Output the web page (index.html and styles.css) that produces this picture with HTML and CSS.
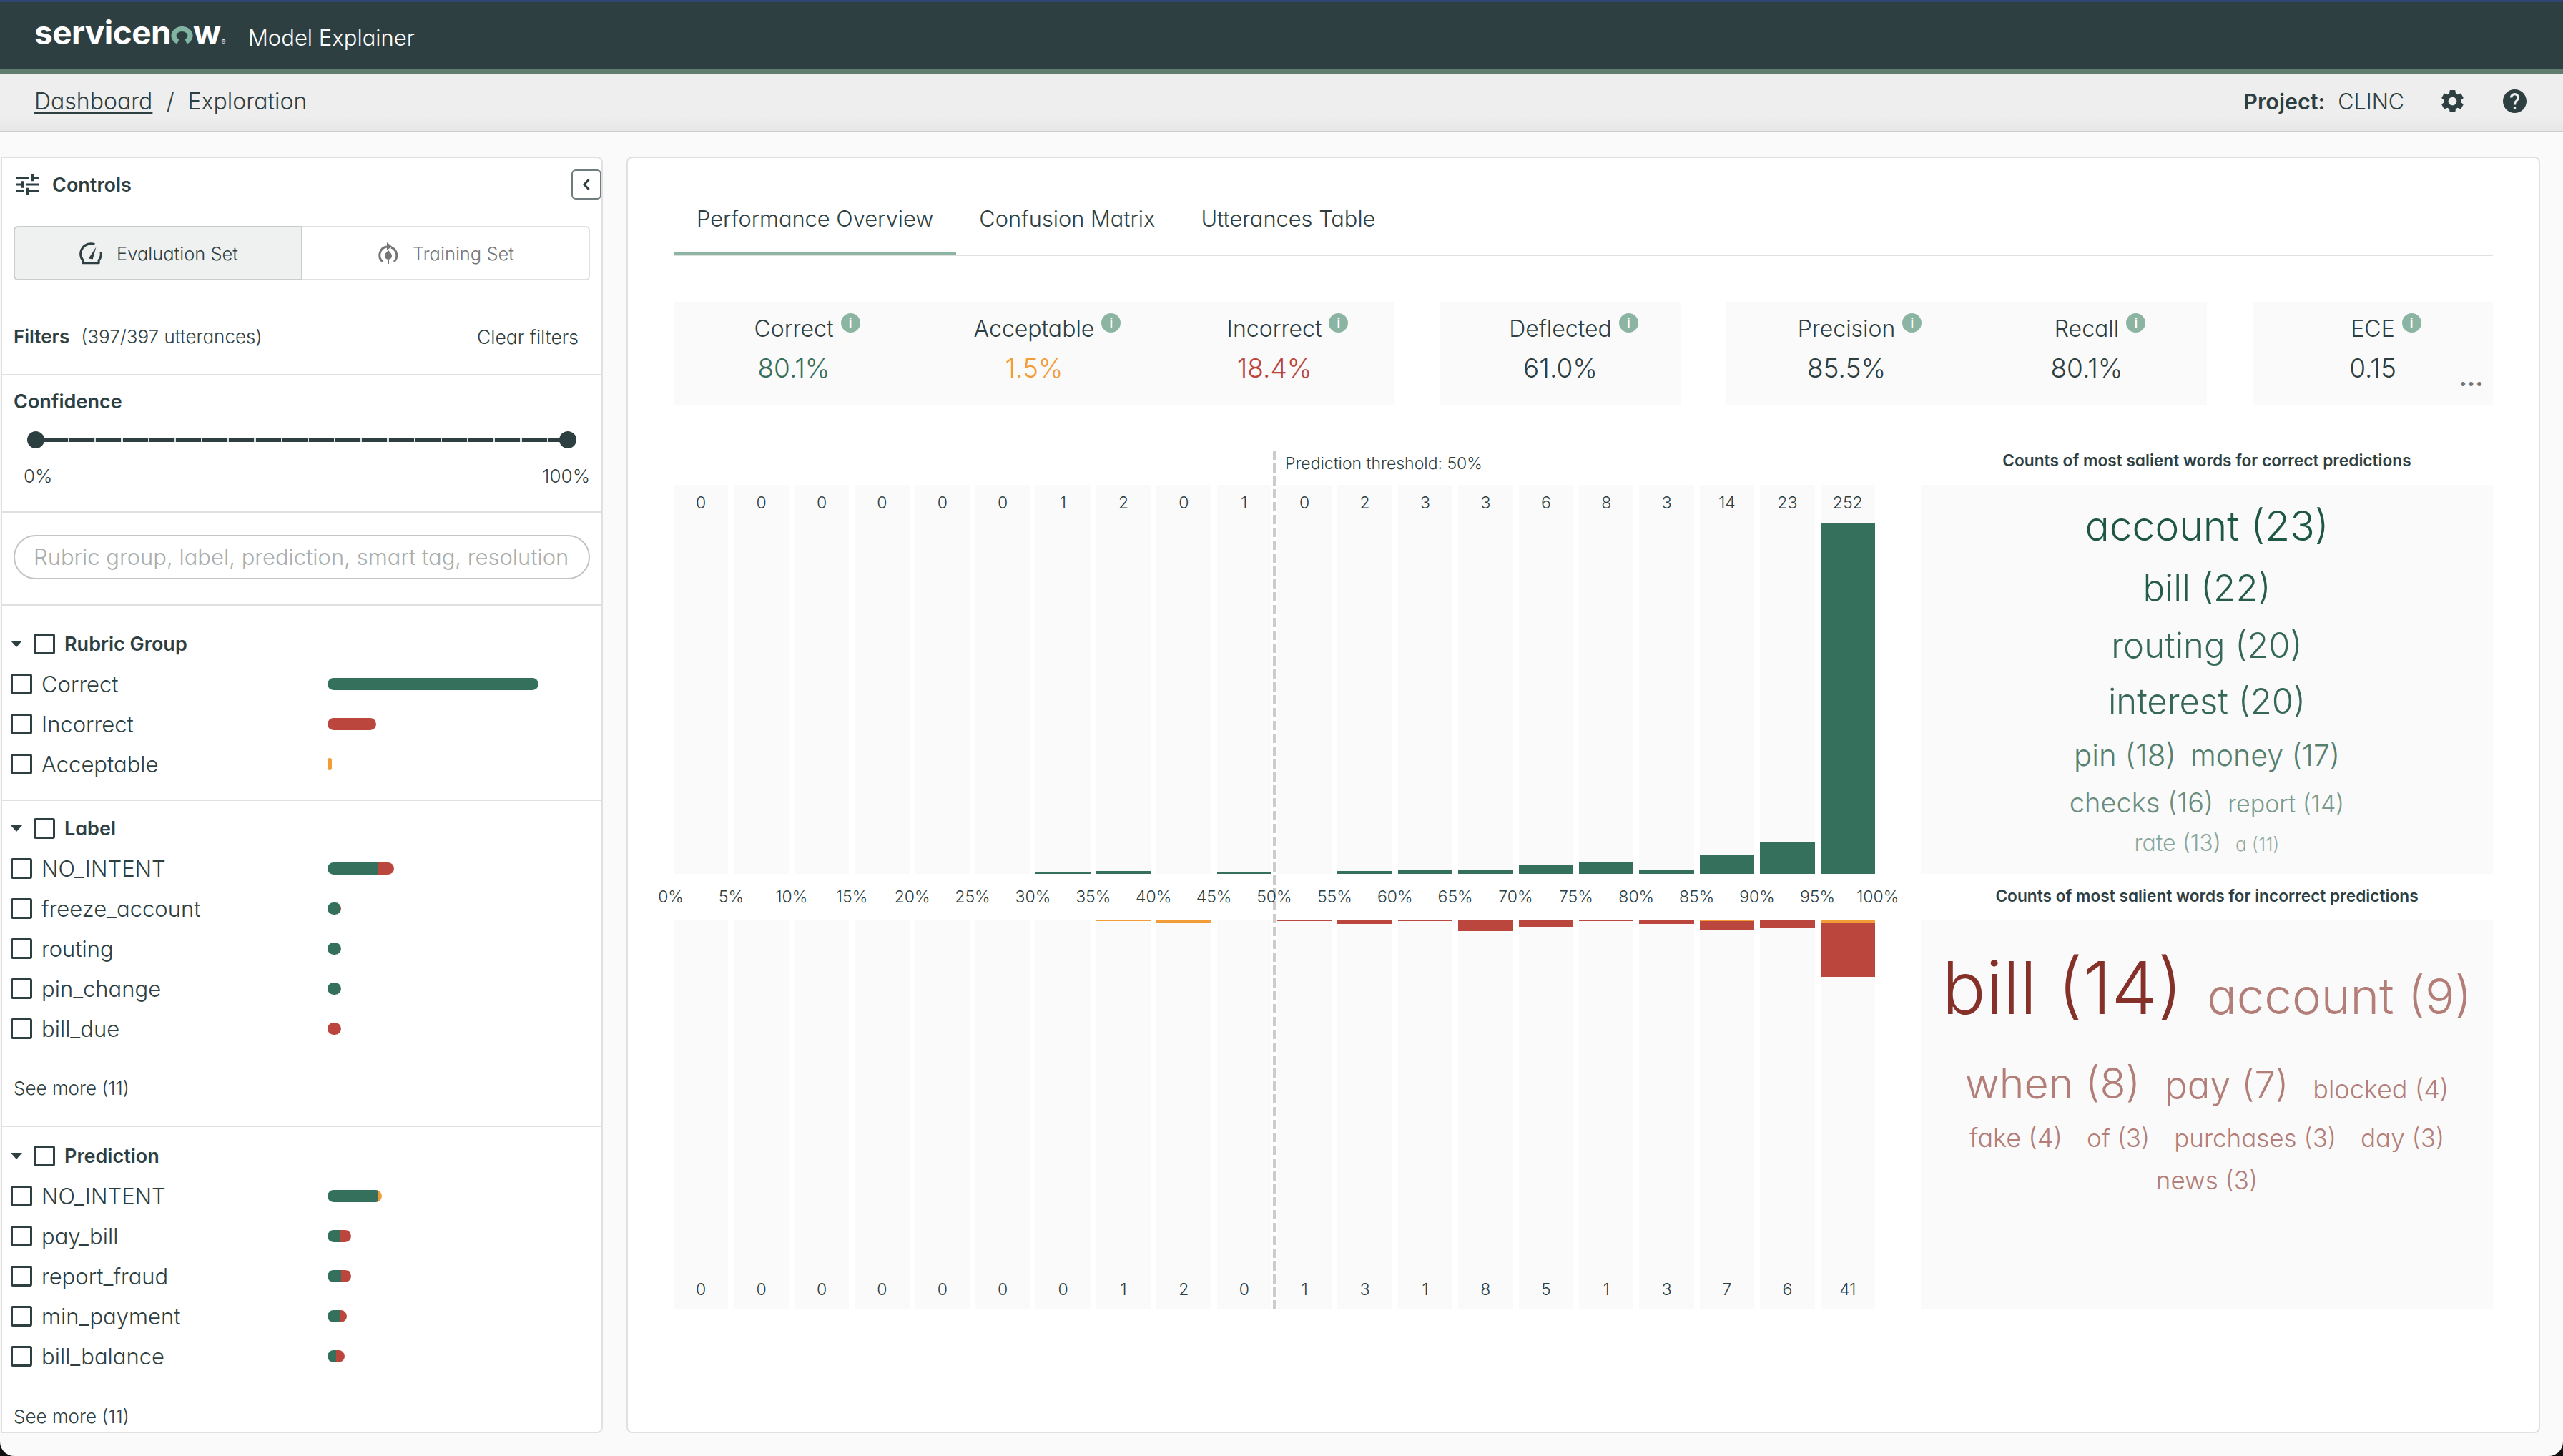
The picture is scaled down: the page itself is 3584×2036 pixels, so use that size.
FILE: index.html
```html
<!DOCTYPE html>
<html lang="en">
<head>
  <meta charset="UTF-8">
  <title>Model Explainer</title>
  <link rel="stylesheet" href="styles.css">
</head>
<body>
<div class="app">
  <!-- Top bar -->
  <header class="topbar">
    <div class="logo">servicen<svg class="logo-ring" viewBox="0 0 30 26"><path d="M9.5 21.3 A11.5 9.5 0 1 1 20.5 21.3" fill="none" stroke="#81b5a1" stroke-width="7"/></svg>w<span class="logo-reg">®</span></div>
    <div class="app-name">Model Explainer</div>
  </header>

  <!-- Breadcrumbs -->
  <nav class="crumbs">
    <a class="crumb-link">Dashboard</a>
    <span class="crumb-sep">/</span>
    <span>Exploration</span>
    <div class="project">
      <strong>Project:</strong>
      <span class="project-name">CLINC</span>
      <svg class="icon-gear" viewBox="0 0 24 24"><path d="M19.14 12.94c.04-.3.06-.61.06-.94 0-.32-.02-.64-.07-.94l2.03-1.58c.18-.14.23-.41.12-.61l-1.92-3.32c-.12-.22-.37-.29-.59-.22l-2.39.96c-.5-.38-1.03-.7-1.62-.94l-.36-2.54c-.04-.24-.24-.41-.48-.41h-3.84c-.24 0-.43.17-.47.41l-.36 2.54c-.59.24-1.13.57-1.62.94l-2.39-.96c-.22-.08-.47 0-.59.22L2.74 8.87c-.12.21-.08.47.12.61l2.03 1.58c-.05.3-.09.63-.09.94s.02.64.07.94l-2.03 1.58c-.18.14-.23.41-.12.61l1.92 3.32c.12.22.37.29.59.22l2.39-.96c.5.38 1.03.7 1.62.94l.36 2.54c.05.24.24.41.48.41h3.84c.24 0 .44-.17.47-.41l.36-2.54c.59-.24 1.13-.56 1.62-.94l2.39.96c.22.08.47 0 .59-.22l1.92-3.32c.12-.22.07-.47-.12-.61l-2.01-1.58zM12 15.6c-1.98 0-3.6-1.62-3.6-3.6s1.62-3.6 3.6-3.6 3.6 1.62 3.6 3.6-1.62 3.6-3.6 3.6z"/></svg>
      <svg class="icon-help" viewBox="2 2 20 20"><path d="M12 2C6.48 2 2 6.48 2 12s4.48 10 10 10 10-4.48 10-10S17.52 2 12 2zm1 17h-2v-2h2v2zm2.07-7.75l-.9.92C13.45 12.9 13 13.5 13 15h-2v-.5c0-1.1.45-2.1 1.17-2.83l1.24-1.26c.37-.36.59-.86.59-1.41 0-1.1-.9-2-2-2s-2 .9-2 2H8c0-2.21 1.79-4 4-4s4 1.79 4 4c0 .88-.36 1.68-.93 2.25z"/></svg>
    </div>
  </nav>

  <div class="content">
    <!-- Controls -->
    <aside class="controls">
      <section class="controls-top">
        <div class="controls-head">
          <svg class="icon-tune" viewBox="3 3 18 18" preserveAspectRatio="none"><path d="M3 17v2h6v-2H3zM3 5v2h10V5H3zm10 16v-2h8v-2h-8v-2h-2v6h2zM7 9v2H3v2h4v2h2V9H7zm14 4v-2H11v2h10zm-6-4h2V7h4V5h-4V3h-2v6z"/></svg>
          <span class="controls-title">Controls</span>
          <button class="collapse-btn"><svg viewBox="0 0 12 20"><path d="M9.5 3 L3 10 L9.5 17" fill="none" stroke="#2e3f42" stroke-width="3"/></svg></button>
        </div>
        <div class="set-toggle">
          <div class="set-btn set-active">
            <svg class="set-icon" viewBox="0 0 34 30"><path d="M22 3.5 A13.5 13.5 0 0 0 6.5 24.5 V28 H27.5 V24.5 A13.5 13.5 0 0 0 30.3 13.5" fill="none" stroke="#2e3f42" stroke-width="3" stroke-linejoin="round"/><path d="M14 22 L24 7 L19.5 23 Z" fill="#2e3f42"/></svg>
            Evaluation Set
          </div>
          <div class="set-btn">
            <svg class="set-icon set-icon-train" viewBox="0 0 32 34"><path d="M8 29 A12 12 0 0 1 14 8 M24 29 A12 12 0 0 0 20 9" fill="none" stroke="#757575" stroke-width="3"/><path d="M14 2 L21 7.5 L14 13 Z" fill="#757575"/><path d="M16 13 C20 17 21 19 21 21 A5 5 0 0 1 11 21 C11 19 12 17 16 13 Z M15 27 h2 v5 h-2 Z" fill="#757575"/></svg>
            Training Set
          </div>
        </div>
        <div class="filters-row">
          <strong>Filters</strong>
          <span class="filters-count">(397/397 utterances)</span>
          <span class="clear-filters">Clear filters</span>
        </div>
      </section>

      <section class="confidence">
        <div class="section-title">Confidence</div>
        <div class="slider"><span class="thumb"></span><div class="track"></div><span class="thumb"></span></div>
        <div class="slider-labels"><span>0%</span><span>100%</span></div>
      </section>

      <section class="search">
        <div class="search-box">Rubric group, label, prediction, smart tag, resolution</div>
      </section>

      <section class="group group-rubric">
        <div class="group-head"><span class="caret"></span><span class="check"></span><strong>Rubric Group</strong></div>
        <div class="row"><span class="check"></span><span class="row-label">Correct</span><div class="mini-bar"><i class="seg-g" style="width:295px"></i></div></div>
        <div class="row"><span class="check"></span><span class="row-label">Incorrect</span><div class="mini-bar"><i class="seg-r" style="width:68px"></i></div></div>
        <div class="row"><span class="check"></span><span class="row-label">Acceptable</span><div class="mini-bar"><i class="seg-o" style="width:6px"></i></div></div>
      </section>

      <section class="group">
        <div class="group-head"><span class="caret"></span><span class="check"></span><strong>Label</strong></div>
        <div class="row"><span class="check"></span><span class="row-label">NO_INTENT</span><div class="mini-bar"><i class="seg-g" style="width:70px"></i><i class="seg-r" style="width:23px"></i></div></div>
        <div class="row"><span class="check"></span><span class="row-label">freeze_account</span><div class="mini-bar"><i class="seg-g" style="width:17px"></i><i class="seg-r" style="width:2px"></i></div></div>
        <div class="row"><span class="check"></span><span class="row-label">routing</span><div class="mini-bar"><i class="seg-g" style="width:19px"></i></div></div>
        <div class="row"><span class="check"></span><span class="row-label">pin_change</span><div class="mini-bar"><i class="seg-g" style="width:19px"></i></div></div>
        <div class="row"><span class="check"></span><span class="row-label">bill_due</span><div class="mini-bar"><i class="seg-r" style="width:19px"></i></div></div>
        <div class="see-more">See more (11)</div>
      </section>

      <section class="group group-last">
        <div class="group-head"><span class="caret"></span><span class="check"></span><strong>Prediction</strong></div>
        <div class="row"><span class="check"></span><span class="row-label">NO_INTENT</span><div class="mini-bar"><i class="seg-g" style="width:70px"></i><i class="seg-o" style="width:6px"></i></div></div>
        <div class="row"><span class="check"></span><span class="row-label">pay_bill</span><div class="mini-bar"><i class="seg-g" style="width:18px"></i><i class="seg-r" style="width:15px"></i></div></div>
        <div class="row"><span class="check"></span><span class="row-label">report_fraud</span><div class="mini-bar"><i class="seg-g" style="width:19px"></i><i class="seg-r" style="width:14px"></i></div></div>
        <div class="row"><span class="check"></span><span class="row-label">min_payment</span><div class="mini-bar"><i class="seg-g" style="width:18px"></i><i class="seg-r" style="width:9px"></i></div></div>
        <div class="row"><span class="check"></span><span class="row-label">bill_balance</span><div class="mini-bar"><i class="seg-g" style="width:12px"></i><i class="seg-r" style="width:12px"></i></div></div>
        <div class="see-more">See more (11)</div>
      </section>
    </aside>

    <!-- Main panel -->
    <main class="panel">
      <div class="tabs">
        <div class="tab tab-active">Performance Overview</div>
        <div class="tab">Confusion Matrix</div>
        <div class="tab">Utterances Table</div>
      </div>

      <div class="stats">
        <div class="stat-group stat-3">
          <div class="stat"><div class="stat-label"><span class="stat-name">Correct<span class="info">i</span></span></div><div class="stat-value val-g">80.1%</div></div>
          <div class="stat"><div class="stat-label"><span class="stat-name">Acceptable<span class="info">i</span></span></div><div class="stat-value val-o">1.5%</div></div>
          <div class="stat"><div class="stat-label"><span class="stat-name">Incorrect<span class="info">i</span></span></div><div class="stat-value val-r">18.4%</div></div>
        </div>
        <div class="stat-group stat-1">
          <div class="stat"><div class="stat-label"><span class="stat-name">Deflected<span class="info">i</span></span></div><div class="stat-value">61.0%</div></div>
        </div>
        <div class="stat-group stat-2">
          <div class="stat"><div class="stat-label"><span class="stat-name">Precision<span class="info">i</span></span></div><div class="stat-value">85.5%</div></div>
          <div class="stat"><div class="stat-label"><span class="stat-name">Recall<span class="info">i</span></span></div><div class="stat-value">80.1%</div></div>
        </div>
        <div class="stat-group stat-1 stat-ece">
          <div class="stat"><div class="stat-label"><span class="stat-name">ECE<span class="info">i</span></span></div><div class="stat-value">0.15</div></div>
          <span class="more-dots">•••</span>
        </div>
      </div>

      <div class="perf">
        <div class="charts">
          <div class="threshold-line"></div>
          <div class="threshold-label">Prediction threshold: 50%</div>
          <div class="bars bars-top">
            <div class="col"><span class="count">0</span></div>
            <div class="col"><span class="count">0</span></div>
            <div class="col"><span class="count">0</span></div>
            <div class="col"><span class="count">0</span></div>
            <div class="col"><span class="count">0</span></div>
            <div class="col"><span class="count">0</span></div>
            <div class="col"><span class="count">1</span><i class="seg-g" style="height:2px"></i></div>
            <div class="col"><span class="count">2</span><i class="seg-g" style="height:4px"></i></div>
            <div class="col"><span class="count">0</span></div>
            <div class="col"><span class="count">1</span><i class="seg-g" style="height:2px"></i></div>
            <div class="col"><span class="count">0</span></div>
            <div class="col"><span class="count">2</span><i class="seg-g" style="height:4px"></i></div>
            <div class="col"><span class="count">3</span><i class="seg-g" style="height:6px"></i></div>
            <div class="col"><span class="count">3</span><i class="seg-g" style="height:6px"></i></div>
            <div class="col"><span class="count">6</span><i class="seg-g" style="height:12px"></i></div>
            <div class="col"><span class="count">8</span><i class="seg-g" style="height:16px"></i></div>
            <div class="col"><span class="count">3</span><i class="seg-g" style="height:6px"></i></div>
            <div class="col"><span class="count">14</span><i class="seg-g" style="height:27px"></i></div>
            <div class="col"><span class="count">23</span><i class="seg-g" style="height:45px"></i></div>
            <div class="col"><span class="count">252</span><i class="seg-g" style="height:491px"></i></div>
          </div>
          <div class="axis">
            <span>0%</span><span>5%</span><span>10%</span><span>15%</span><span>20%</span><span>25%</span><span>30%</span>
            <span>35%</span><span>40%</span><span>45%</span><span>50%</span><span>55%</span><span>60%</span><span>65%</span>
            <span>70%</span><span>75%</span><span>80%</span><span>85%</span><span>90%</span><span>95%</span><span>100%</span>
          </div>
          <div class="bars bars-bottom">
            <div class="col"><span class="count">0</span></div>
            <div class="col"><span class="count">0</span></div>
            <div class="col"><span class="count">0</span></div>
            <div class="col"><span class="count">0</span></div>
            <div class="col"><span class="count">0</span></div>
            <div class="col"><span class="count">0</span></div>
            <div class="col"><span class="count">0</span></div>
            <div class="col"><div class="stack"><i class="seg-o" style="height:2px"></i></div><span class="count">1</span></div>
            <div class="col"><div class="stack"><i class="seg-o" style="height:4px"></i></div><span class="count">2</span></div>
            <div class="col"><span class="count">0</span></div>
            <div class="col"><div class="stack"><i class="seg-r" style="height:2px"></i></div><span class="count">1</span></div>
            <div class="col"><div class="stack"><i class="seg-r" style="height:6px"></i></div><span class="count">3</span></div>
            <div class="col"><div class="stack"><i class="seg-r" style="height:2px"></i></div><span class="count">1</span></div>
            <div class="col"><div class="stack"><i class="seg-r" style="height:16px"></i></div><span class="count">8</span></div>
            <div class="col"><div class="stack"><i class="seg-r" style="height:10px"></i></div><span class="count">5</span></div>
            <div class="col"><div class="stack"><i class="seg-r" style="height:2px"></i></div><span class="count">1</span></div>
            <div class="col"><div class="stack"><i class="seg-r" style="height:6px"></i></div><span class="count">3</span></div>
            <div class="col"><div class="stack"><i class="seg-o" style="height:2px"></i><i class="seg-r" style="height:12px"></i></div><span class="count">7</span></div>
            <div class="col"><div class="stack"><i class="seg-r" style="height:12px"></i></div><span class="count">6</span></div>
            <div class="col"><div class="stack"><i class="seg-o" style="height:4px"></i><i class="seg-r" style="height:76px"></i></div><span class="count">41</span></div>
          </div>
        </div>

        <div class="clouds">
          <div class="cloud-title cloud-title-first">Counts of most salient words for correct predictions</div>
          <div class="cloud cloud-good">
            <div class="cloud-row"><span class="g1">account (23)</span></div>
            <div class="cloud-row"><span class="g2">bill (22)</span></div>
            <div class="cloud-row"><span class="g3">routing (20)</span></div>
            <div class="cloud-row"><span class="g3">interest (20)</span></div>
            <div class="cloud-row"><span class="g4">pin (18)</span><span class="g4b">money (17)</span></div>
            <div class="cloud-row"><span class="g5">checks (16)</span><span class="g6">report (14)</span></div>
            <div class="cloud-row"><span class="g7">rate (13)</span><span class="g8">a (11)</span></div>
          </div>
          <div class="cloud-title">Counts of most salient words for incorrect predictions</div>
          <div class="cloud cloud-bad">
            <div class="cloud-row bad-row-1"><span class="b1">bill (14)</span><span class="b2">account (9)</span></div>
            <div class="cloud-row bad-row-2"><span class="b3">when (8)</span><span class="b4">pay (7)</span><span class="b5">blocked (4)</span></div>
            <div class="cloud-row bad-row-3"><span class="b5">fake (4)</span><span class="b6">of (3)</span><span class="b6">purchases (3)</span><span class="b6">day (3)</span></div>
            <div class="cloud-row bad-row-4"><span class="b6">news (3)</span></div>
          </div>
        </div>
      </div>
    </main>
  </div>
</div>
</body>
</html>
```

FILE: styles.css
```css
/* Page */
* { box-sizing: border-box; }

body {
  margin: 0;
  background: #111;
  font-family: Inter, "Liberation Sans", sans-serif;
  font-feature-settings: "cv11";
  font-weight: 300;
  color: #2e3f42;
}

.app {
  height: 2036px;
  display: flex;
  flex-direction: column;
  background: #fafafa;
  border-radius: 0 0 20px 20px;
  overflow: hidden;
}

strong { font-weight: 600; }

/* Top bar */
.topbar {
  height: 104px;
  flex: none;
  display: flex;
  align-items: center;
  padding: 5px 0 0 48px;
  background: #2e3f42;
  border-top: 3px solid #2d4672;
  border-bottom: 8px solid #607d6f;
}

.logo {
  font-size: 46px;
  font-weight: 700;
  color: #fff;
  line-height: 52px;
  letter-spacing: -0.6px;
  white-space: nowrap;
}

.logo-ring { width: 31px; height: 26px; vertical-align: -1px; }
.logo-reg { font-size: 9px; font-weight: 400; margin-left: 1px; }

.app-name { margin-left: 32px; font-size: 31px; color: #fff; }

/* Breadcrumbs */
.crumbs {
  height: 81px;
  flex: none;
  display: flex;
  align-items: center;
  padding: 0 51px 4px 48px;
  background: linear-gradient(#eee 75%, #e6e6e6);
  border-bottom: 2px solid #ccc;
  font-size: 32px;
}

.crumb-link { text-decoration: underline; text-decoration-thickness: 2px; text-underline-offset: 4px; }
.crumb-sep { margin: 0 19px; }

.project { margin-left: auto; display: flex; align-items: center; font-size: 30.5px; }
.project-name { margin-left: 18px; }
.icon-gear { width: 39px; height: 39px; margin-left: 48px; fill: #2e3f42; }
.icon-help { width: 33px; height: 33px; margin-left: 51px; fill: #2e3f42; }

/* Layout under the bars */
.content {
  flex: 1;
  min-height: 0;
  display: flex;
  gap: 33px;
  padding: 34px 32px 32px 1px;
}

/* Controls */
.controls {
  width: 842px;
  flex: none;
  background: #fff;
  border: 2px solid #e0e0e0;
  border-radius: 0 8px 8px 0;
  overflow: hidden;
}

.controls section { border-bottom: 2px solid #e0e0e0; }

.controls-top { height: 304px; padding: 16px 0 0 16px; }

.controls-head { height: 42px; display: flex; align-items: center; margin-bottom: 37px; }
.icon-tune { width: 31px; height: 28px; margin-left: 4px; fill: #2e3f42; }
.controls-title { margin-left: 19px; font-size: 27px; font-weight: 600; }

.collapse-btn {
  width: 42px;
  height: 42px;
  margin-left: auto;
  padding: 0;
  display: flex;
  align-items: center;
  justify-content: center;
  background: #fff;
  border: 2px solid #6f7c7e;
  border-radius: 6px;
}
.collapse-btn svg { width: 12px; height: 20px; }

.set-toggle {
  width: 806px;
  height: 76px;
  display: flex;
  font-size: 25.5px;
}

.set-btn {
  flex: 1;
  display: flex;
  align-items: center;
  justify-content: center;
  gap: 18px;
  color: #757575;
  border: 2px solid #e0e0e0;
  border-left: 0;
  border-radius: 0 6px 6px 0;
}

.set-active {
  color: #2e3f42;
  background: #eff1f0;
  border: 2px solid #ccc;
  border-radius: 6px 0 0 6px;
}

.set-icon { width: 36px; height: 32px; }
.set-icon-train { width: 32px; height: 34px; }

.filters-row {
  width: 806px;
  display: flex;
  margin-top: 61px;
  font-size: 26px;
  line-height: 36px;
}
.filters-count { margin-left: 16px; }
.clear-filters { margin-left: auto; margin-right: 16px; font-size: 26.5px; }

/* Confidence */
.confidence { height: 192px; padding: 20px 16px 0; }
.section-title { font-size: 27px; font-weight: 600; line-height: 34px; }

.slider { display: flex; align-items: center; padding: 0 19px; margin-top: 24px; }
.track {
  flex: 1;
  height: 6px;
  margin: 0 -2px;
  background: repeating-linear-gradient(90deg, #2e3f42 0 35px, #ddd 35px 37.2px);
}
.thumb { width: 24px; height: 24px; border-radius: 50%; background: #2e3f42; }

.slider-labels {
  display: flex;
  justify-content: space-between;
  margin: 22px 0 0 14px;
  font-size: 26px;
  line-height: 34px;
}

/* Search */
.search { height: 130px; padding: 31px 16px 0; }
.search-box {
  height: 62px;
  padding: 0 26px;
  border: 2px solid #c4c4c4;
  border-radius: 31px;
  color: #a9aeae;
  font-size: 31px;
  line-height: 58px;
  white-space: nowrap;
  overflow: hidden;
}

/* Filter groups */
.group { padding: 10px 0 0 12px; }
.group-rubric { padding: 25px 0 22px 12px; }
.controls .group-last { padding-top: 12px; border-bottom: 0; }

.group-head, .row { height: 56px; display: flex; align-items: center; }
.group-head { font-size: 27px; }
.group-head strong { margin-left: 13px; }

.caret {
  width: 0;
  height: 0;
  margin-right: 16px;
  border-left: 8px solid transparent;
  border-right: 8px solid transparent;
  border-top: 9px solid #2e3f42;
}

.check {
  width: 30px;
  height: 29px;
  flex: none;
  border: 3px solid #2e3f42;
  border-radius: 3px;
}

.row { font-size: 31px; }
.row-label { width: 400px; margin-left: 13px; }

.mini-bar { display: flex; height: 17px; border-radius: 9px; overflow: hidden; }
.mini-bar i { display: block; height: 100%; }

.see-more { height: 44px; margin: 34px 0 30px 4px; font-size: 26px; line-height: 44px; }
.group-last .see-more { margin-top: 35px; }

/* Shared bar colours */
.seg-g { display: block; background: #35705c; }
.seg-r { display: block; background: #bb463d; }
.seg-o { display: block; background: #f29c38; }

/* Main panel */
.panel {
  flex: 1;
  min-width: 0;
  padding: 0 64px;
  background: #fff;
  border: 2px solid #e0e0e0;
  border-radius: 8px;
}

.tabs {
  height: 106px;
  margin: 31px 0 64px;
  display: flex;
  border-bottom: 2px solid #e0e0e0;
  font-size: 30.8px;
}

.tab { padding: 34px 32px 0; line-height: 40px; white-space: nowrap; }
.tab-active { border-bottom: 4px solid #8bb5a2; }

/* Stat boxes */
.stats {
  height: 144px;
  display: grid;
  grid-template-columns: 3fr 1fr 2fr 1fr;
  gap: 64px;
}

.stat-group { display: grid; position: relative; background: #fafafa; }
.stat-3 { grid-template-columns: repeat(3, 1fr); }
.stat-2 { grid-template-columns: repeat(2, 1fr); }

.stat { text-align: center; padding-top: 18px; }
.stat-label { font-size: 32px; line-height: 40px; }
.stat-name { position: relative; }
.stat-value { margin-top: 15px; font-size: 37px; line-height: 40px; }

.val-g { color: #35705c; }
.val-o { color: #f29c38; }
.val-r { color: #bb463d; }

.info {
  position: absolute;
  left: 100%;
  top: -2px;
  width: 27px;
  height: 27px;
  margin-left: 10px;
  border-radius: 50%;
  background: #8bb5a2;
  color: #fff;
  font-size: 18px;
  font-weight: 600;
  line-height: 27px;
}

.more-dots {
  position: absolute;
  right: 14px;
  bottom: 21px;
  font-size: 22px;
  line-height: 20px;
  letter-spacing: -1px;
  color: #777;
}

/* Charts */
.perf { display: flex; gap: 64px; margin-top: 64px; }
.charts { position: relative; width: 1680px; flex: none; }

.threshold-line {
  position: absolute;
  left: 838px;
  top: 0;
  bottom: 0;
  width: 5px;
  background: repeating-linear-gradient(#ccc 0 13px, transparent 13px 18px);
}

.threshold-label {
  height: 48px;
  padding: 5px 0 0 855px;
  font-size: 23px;
  line-height: 26px;
}

.bars {
  height: 544px;
  display: grid;
  grid-template-columns: repeat(20, 1fr);
  gap: 8px;
}

.col {
  display: flex;
  flex-direction: column;
  justify-content: space-between;
  background: #fafafa;
  text-align: center;
  font-size: 23px;
}

.bars-top .count { line-height: 50px; }
.bars-bottom .count { margin-top: auto; line-height: 54px; }

.axis {
  position: relative;
  height: 64px;
  margin: 0 -4px;
  display: flex;
  justify-content: space-between;
  align-items: center;
  font-size: 23px;
  padding-bottom: 1px;
}

.axis span { width: 0; display: flex; justify-content: center; }

/* Word clouds */
.clouds { flex: 1; min-width: 0; }

.cloud-title {
  height: 64px;
  text-align: center;
  font-size: 22.7px;
  font-weight: 600;
  line-height: 61px;
}

.cloud-title-first { height: 48px; line-height: 28px; }

.cloud { height: 544px; background: #fafafa; overflow: hidden; }
.cloud-good { padding-top: 14px; }
.cloud-bad { padding-top: 30px; }

.cloud-row { display: flex; justify-content: center; align-items: baseline; gap: 20px; white-space: nowrap; }

.g1 { font-size: 57px; line-height: 88px; color: #1f5745; }
.g2 { font-size: 51px; line-height: 84px; color: #265c4b; }
.g3 { font-size: 49px; line-height: 78px; color: #36685a; }
.g4 { font-size: 42px; line-height: 71px; color: #55806f; }
.g4b { font-size: 41px; line-height: 71px; color: #55806f; }
.g5 { font-size: 38px; line-height: 61px; color: #6a8d80; }
.g6 { font-size: 34px; line-height: 61px; color: #7a9a8e; }
.g7 { font-size: 32px; line-height: 50px; color: #8aa79d; }
.g8 { font-size: 26px; line-height: 50px; color: #92aca3; }

.b1 { font-size: 102px; line-height: 130px; color: #85312a; }
.b2 { font-size: 69px; color: #b37e78; }
.b3 { font-size: 59px; color: #b37e78; }
.b4 { font-size: 52.5px; color: #b37e78; }
.b5 { font-size: 36px; color: #b37e78; }
.b6 { font-size: 35px; color: #b37e78; }

.bad-row-1 { gap: 34px; }
.bad-row-2 { gap: 34px; margin-top: 31px; line-height: 76px; }
.bad-row-3 { gap: 34px; line-height: 60px; }
.bad-row-4 { line-height: 58px; }
```
